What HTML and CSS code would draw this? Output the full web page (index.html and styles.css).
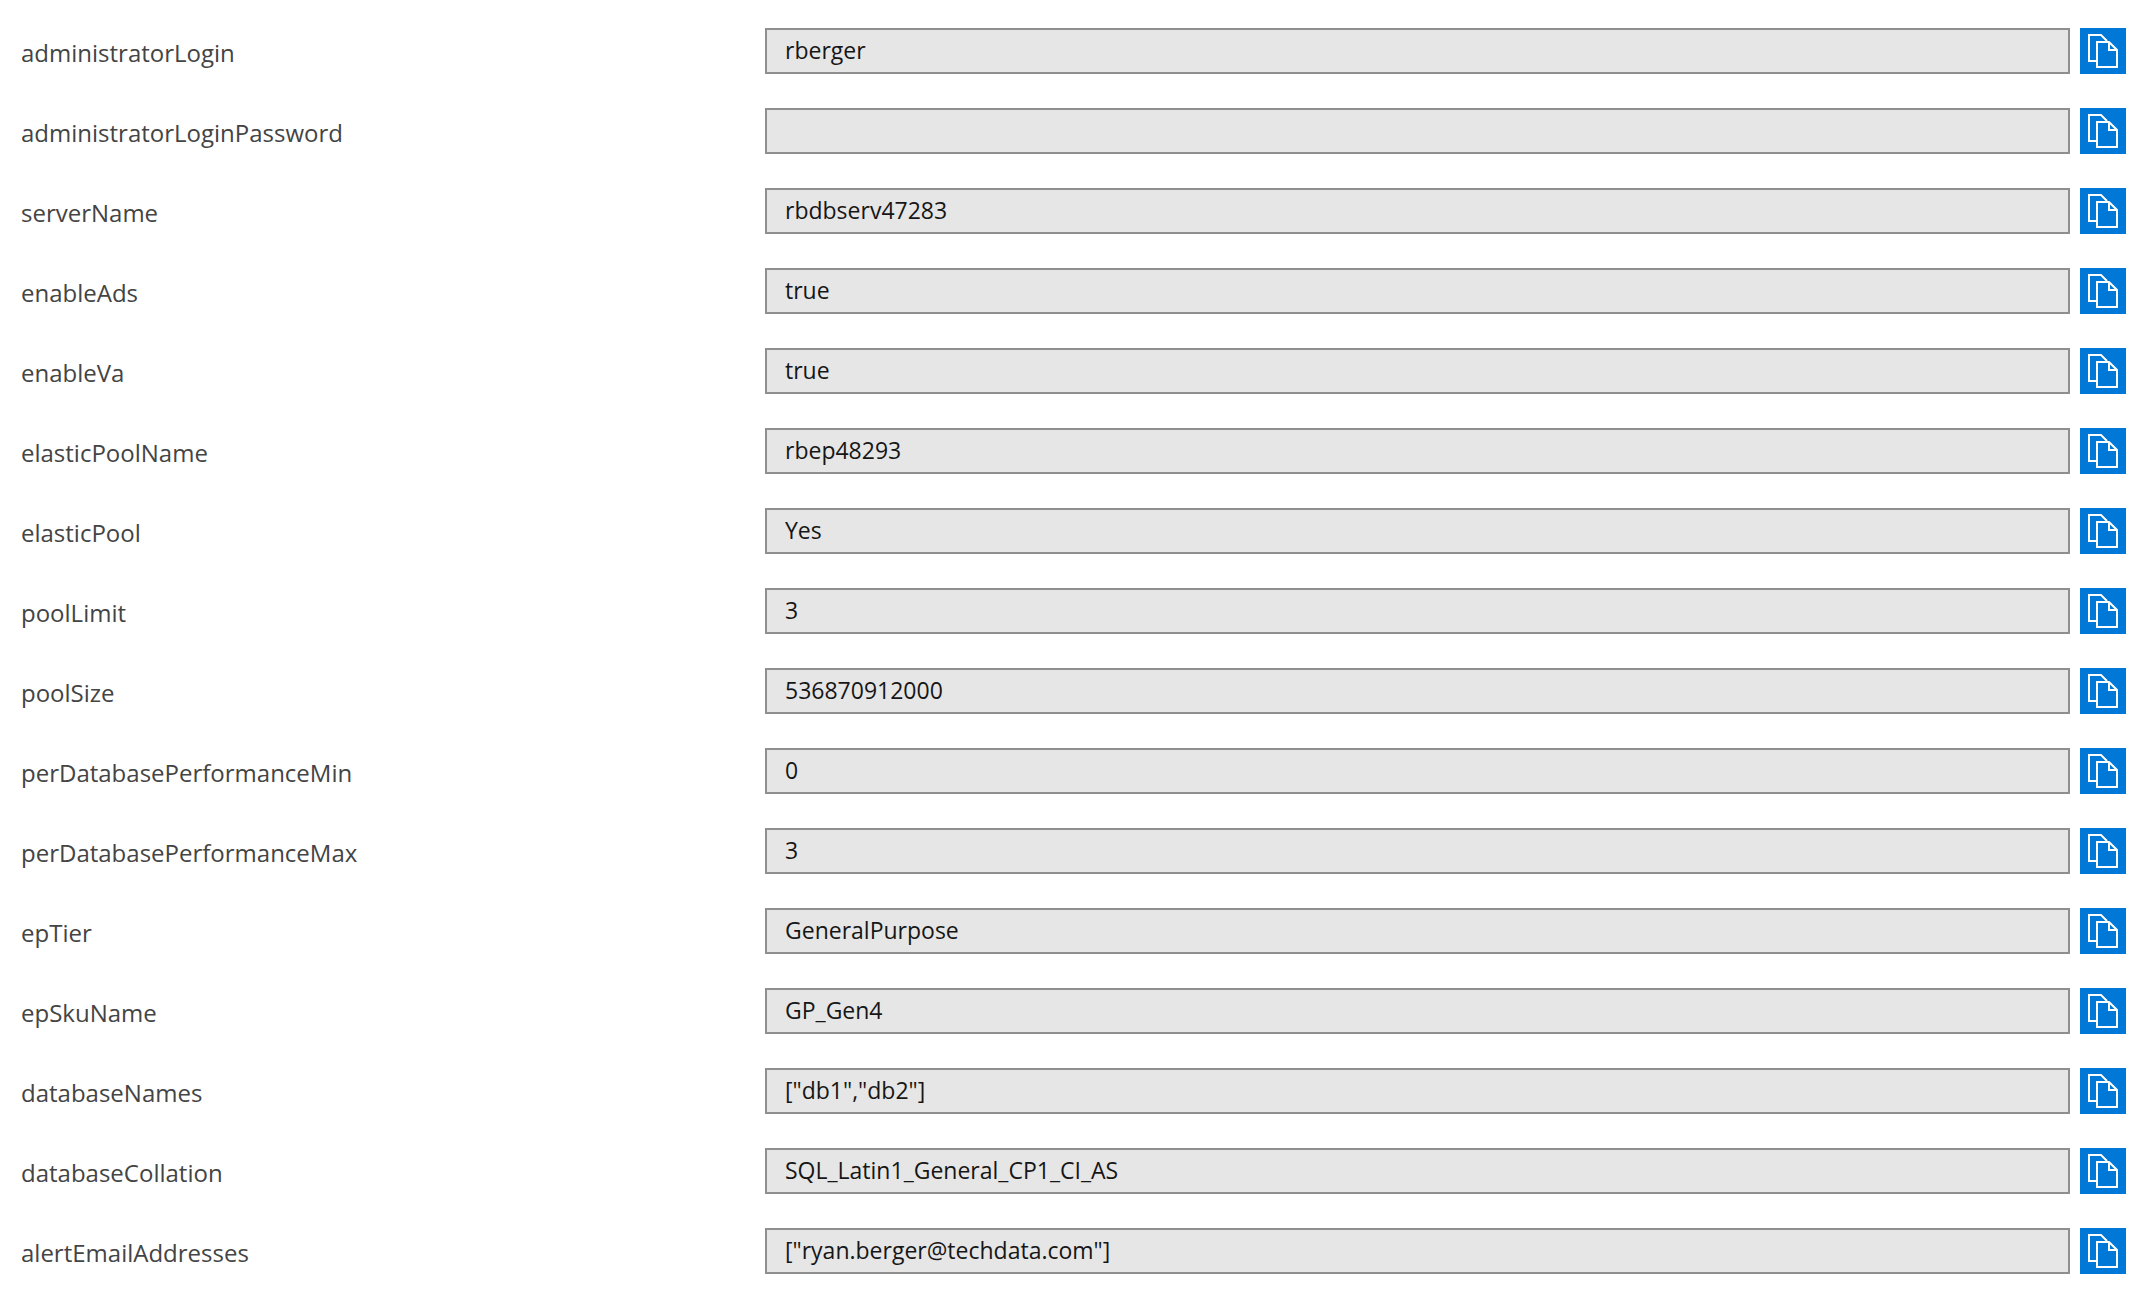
FILE: index.html
```html
<!DOCTYPE html>
<html lang="en">
<head>
<meta charset="utf-8">
<meta name="viewport" content="width=device-width, initial-scale=1">
<title>Deployment inputs</title>
<link rel="stylesheet" href="styles.css">
</head>
<body>
<svg class="sprite" aria-hidden="true">
  <symbol id="copy" viewBox="0 0 46 46">
    <path d="M17 33H9V7H21L27 13" />
    <path d="M17 14H29L37 22V39H17ZM29 14V22H37" />
  </symbol>
</svg>
<main class="inputs">
  <div class="row"><label class="name" for="f1">administratorLogin</label><input class="value" id="f1" type="text" value="rberger" readonly><button class="copy" type="button" aria-label="Copy administratorLogin"><svg class="icon"><use href="#copy"/></svg></button></div>
  <div class="row"><label class="name" for="f2">administratorLoginPassword</label><input class="value" id="f2" type="text" value="" readonly><button class="copy" type="button" aria-label="Copy administratorLoginPassword"><svg class="icon"><use href="#copy"/></svg></button></div>
  <div class="row"><label class="name" for="f3">serverName</label><input class="value" id="f3" type="text" value="rbdbserv47283" readonly><button class="copy" type="button" aria-label="Copy serverName"><svg class="icon"><use href="#copy"/></svg></button></div>
  <div class="row"><label class="name" for="f4">enableAds</label><input class="value" id="f4" type="text" value="true" readonly><button class="copy" type="button" aria-label="Copy enableAds"><svg class="icon"><use href="#copy"/></svg></button></div>
  <div class="row"><label class="name" for="f5">enableVa</label><input class="value" id="f5" type="text" value="true" readonly><button class="copy" type="button" aria-label="Copy enableVa"><svg class="icon"><use href="#copy"/></svg></button></div>
  <div class="row"><label class="name" for="f6">elasticPoolName</label><input class="value" id="f6" type="text" value="rbep48293" readonly><button class="copy" type="button" aria-label="Copy elasticPoolName"><svg class="icon"><use href="#copy"/></svg></button></div>
  <div class="row"><label class="name" for="f7">elasticPool</label><input class="value" id="f7" type="text" value="Yes" readonly><button class="copy" type="button" aria-label="Copy elasticPool"><svg class="icon"><use href="#copy"/></svg></button></div>
  <div class="row"><label class="name" for="f8">poolLimit</label><input class="value" id="f8" type="text" value="3" readonly><button class="copy" type="button" aria-label="Copy poolLimit"><svg class="icon"><use href="#copy"/></svg></button></div>
  <div class="row"><label class="name" for="f9">poolSize</label><input class="value" id="f9" type="text" value="536870912000" readonly><button class="copy" type="button" aria-label="Copy poolSize"><svg class="icon"><use href="#copy"/></svg></button></div>
  <div class="row"><label class="name" for="f10">perDatabasePerformanceMin</label><input class="value" id="f10" type="text" value="0" readonly><button class="copy" type="button" aria-label="Copy perDatabasePerformanceMin"><svg class="icon"><use href="#copy"/></svg></button></div>
  <div class="row"><label class="name" for="f11">perDatabasePerformanceMax</label><input class="value" id="f11" type="text" value="3" readonly><button class="copy" type="button" aria-label="Copy perDatabasePerformanceMax"><svg class="icon"><use href="#copy"/></svg></button></div>
  <div class="row"><label class="name" for="f12">epTier</label><input class="value" id="f12" type="text" value="GeneralPurpose" readonly><button class="copy" type="button" aria-label="Copy epTier"><svg class="icon"><use href="#copy"/></svg></button></div>
  <div class="row"><label class="name" for="f13">epSkuName</label><input class="value" id="f13" type="text" value="GP_Gen4" readonly><button class="copy" type="button" aria-label="Copy epSkuName"><svg class="icon"><use href="#copy"/></svg></button></div>
  <div class="row"><label class="name" for="f14">databaseNames</label><input class="value" id="f14" type="text" value="[&quot;db1&quot;,&quot;db2&quot;]" readonly><button class="copy" type="button" aria-label="Copy databaseNames"><svg class="icon"><use href="#copy"/></svg></button></div>
  <div class="row"><label class="name" for="f15">databaseCollation</label><input class="value" id="f15" type="text" value="SQL_Latin1_General_CP1_CI_AS" readonly><button class="copy" type="button" aria-label="Copy databaseCollation"><svg class="icon"><use href="#copy"/></svg></button></div>
  <div class="row"><label class="name" for="f16">alertEmailAddresses</label><input class="value" id="f16" type="text" value="[&quot;ryan.berger@techdata.com&quot;]" readonly><button class="copy" type="button" aria-label="Copy alertEmailAddresses"><svg class="icon"><use href="#copy"/></svg></button></div>
</main>
</body>
</html>
```
FILE: styles.css
```css
* {
  box-sizing: border-box;
}

body {
  margin: 0;
  background: #fff;
  font-family: "Segoe UI", "Open Sans", "Noto Sans", sans-serif;
}

.sprite {
  display: none;
}

.inputs {
  display: flex;
  flex-direction: column;
  gap: 34px;
  padding: 28px 22px 36px 21px;
}

.row {
  display: grid;
  grid-template-columns: minmax(0, 734fr) minmax(0, 1305fr) 46px;
  column-gap: 10px;
  align-items: center;
}

.name {
  padding-top: 4px;
  color: #444;
  font-size: 24px;
  line-height: 34px;
}

.value {
  width: 100%;
  height: 46px;
  margin: 0;
  padding: 0 18px 2px;
  border: 2px solid #8f8f8f;
  border-radius: 0;
  outline: 0;
  background: #e6e6e6;
  color: #161616;
  font-family: inherit;
  font-size: 23px;
}

.copy {
  width: 46px;
  height: 46px;
  margin: 0;
  padding: 0;
  border: 0;
  background: #0078d7;
  cursor: pointer;
}

.icon {
  display: block;
  width: 46px;
  height: 46px;
  fill: none;
  stroke: #fff;
  stroke-width: 2;
}
```
